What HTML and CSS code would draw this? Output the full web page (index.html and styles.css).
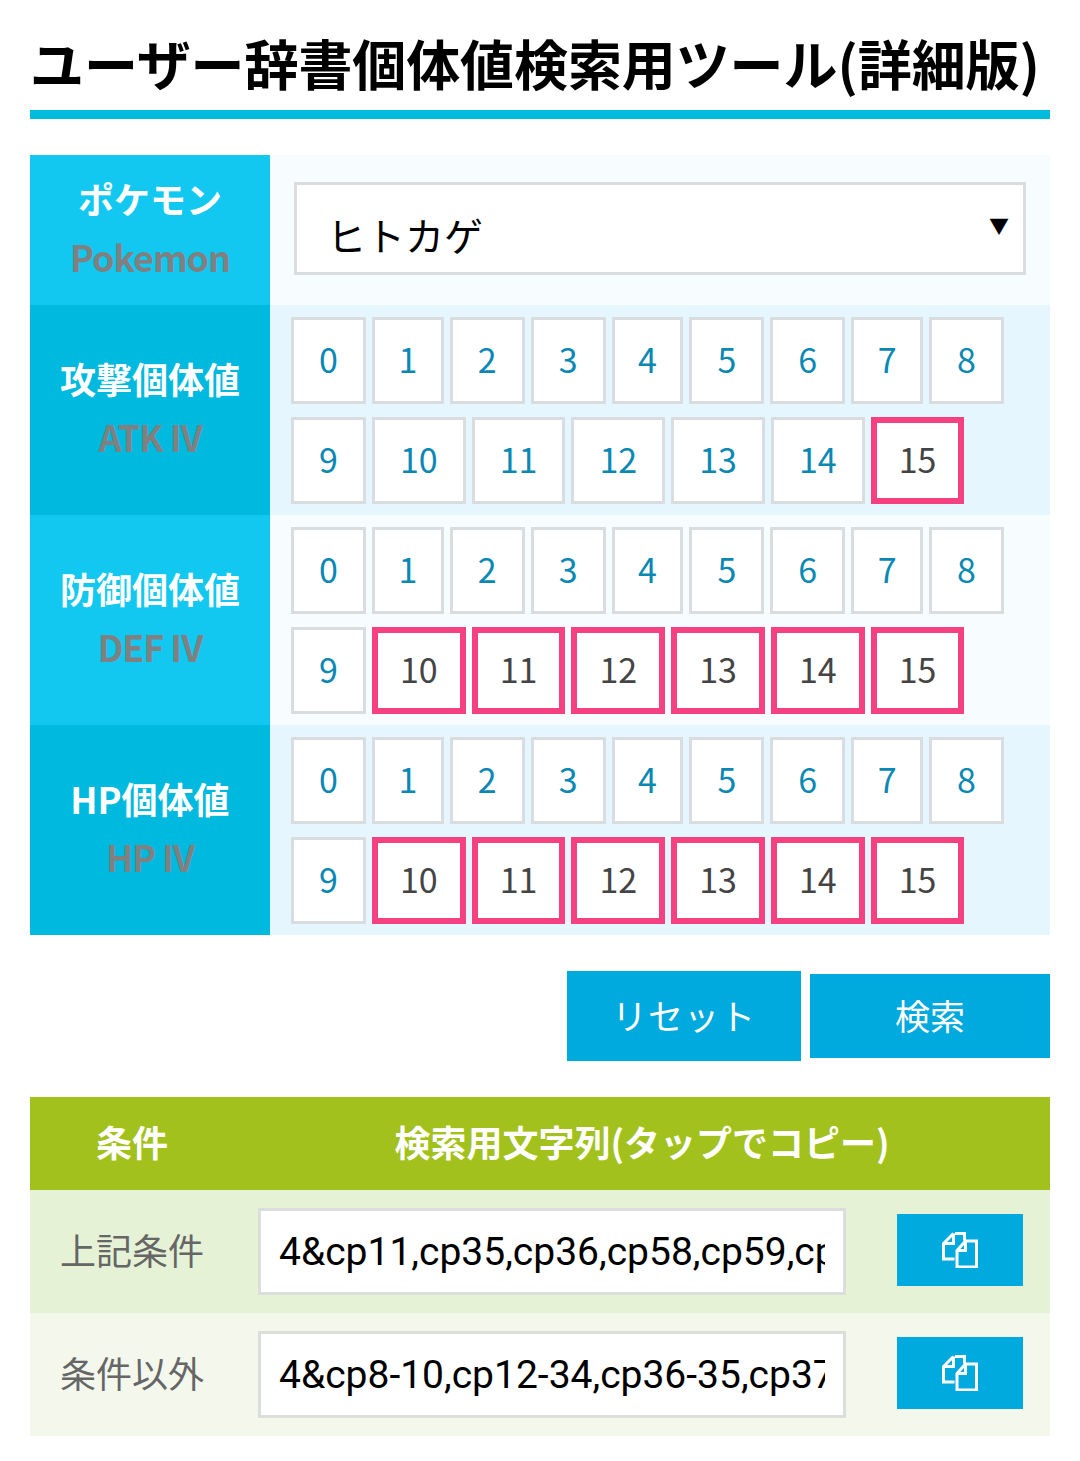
FILE: index.html
```html
<!DOCTYPE html>
<html lang="ja">
<head>
  <meta charset="UTF-8" />
  <meta name="viewport" content="width=device-width, initial-scale=1.0"/>
  <title>ユーザー辞書個体値検索用ツール(詳細版)</title>
  <link rel="stylesheet" href="styles.css">
</head>
<body>

<h1 class="page-title">ユーザー辞書個体値検索用ツール(詳細版)</h1>

<section class="form-table">
  <div class="form-row">
    <div class="form-label">ポケモン<span class="label-en">Pokemon</span></div>
    <div class="form-body pokemon-body">
      <div class="select-wrap">
        <select class="pokemon-select"><option>ヒトカゲ</option></select>
      </div>
    </div>
  </div>

  <div class="form-row">
    <div class="form-label">攻撃個体値<span class="label-en">ATK IV</span></div>
    <div class="form-body iv-list">
      <span class="iv">0</span><span class="iv narrow">1</span><span class="iv">2</span><span class="iv">3</span><span class="iv narrow">4</span><span class="iv">5</span><span class="iv">6</span><span class="iv narrow">7</span><span class="iv">8</span>
      <span class="iv">9</span><span class="iv">10</span><span class="iv">11</span><span class="iv">12</span><span class="iv">13</span><span class="iv">14</span><span class="iv on">15</span>
    </div>
  </div>

  <div class="form-row">
    <div class="form-label">防御個体値<span class="label-en">DEF IV</span></div>
    <div class="form-body iv-list">
      <span class="iv">0</span><span class="iv narrow">1</span><span class="iv">2</span><span class="iv">3</span><span class="iv narrow">4</span><span class="iv">5</span><span class="iv">6</span><span class="iv narrow">7</span><span class="iv">8</span>
      <span class="iv">9</span><span class="iv on">10</span><span class="iv on">11</span><span class="iv on">12</span><span class="iv on">13</span><span class="iv on">14</span><span class="iv on">15</span>
    </div>
  </div>

  <div class="form-row">
    <div class="form-label">HP個体値<span class="label-en">HP IV</span></div>
    <div class="form-body iv-list">
      <span class="iv">0</span><span class="iv narrow">1</span><span class="iv">2</span><span class="iv">3</span><span class="iv narrow">4</span><span class="iv">5</span><span class="iv">6</span><span class="iv narrow">7</span><span class="iv">8</span>
      <span class="iv">9</span><span class="iv on">10</span><span class="iv on">11</span><span class="iv on">12</span><span class="iv on">13</span><span class="iv on">14</span><span class="iv on">15</span>
    </div>
  </div>
</section>

<div class="actions">
  <button class="btn btn-reset">リセット</button>
  <button class="btn btn-search">検索</button>
</div>

<section class="result-table">
  <div class="result-head">
    <div class="head-cond">条件</div>
    <div class="head-text">検索用文字列(タップでコピー)</div>
  </div>

  <div class="result-row">
    <div class="result-label">上記条件</div>
    <input class="result-input" type="text" value="4&amp;cp11,cp35,cp36,cp58,cp59,cp60,cp61">
    <button class="copy-btn" aria-label="コピー">
      <svg class="copy-icon" viewBox="0 0 36 36"><path d="M13 1.5h9.500v7M11.500 1.500L1.500 11.500V27h11M11.500 1.500V11.500H1.500M23.500 9H34.500V35H15V18.500ZM23.500 9V18.500H15"/></svg>
    </button>
  </div>

  <div class="result-row">
    <div class="result-label">条件以外</div>
    <input class="result-input" type="text" value="4&amp;cp8-10,cp12-34,cp36-35,cp37-57">
    <button class="copy-btn" aria-label="コピー">
      <svg class="copy-icon" viewBox="0 0 36 36"><path d="M13 1.5h9.500v7M11.500 1.500L1.500 11.500V27h11M11.500 1.500V11.500H1.500M23.500 9H34.500V35H15V18.500ZM23.500 9V18.500H15"/></svg>
    </button>
  </div>
</section>

</body>
</html>
```

FILE: styles.css
```css
body {
  margin: 0;
  padding: 30px 30px 25px;
  background-color: #fff;
  font-family: "Noto Sans CJK JP", "Noto Sans", sans-serif;
  color: #333;
}
.page-title {
  margin: 0 0 36px;
  height: 80px;
  line-height: 66px;
  font-size: 54px;
  font-weight: 700;
  letter-spacing: -0.1px;
  color: #000;
  white-space: nowrap;
  border-bottom: 9px solid #00bcdc;
}
.form-row {
  display: flex;
  min-height: 210px;
}
.form-row:first-child {
  min-height: 150px;
}
.form-label {
  box-sizing: border-box;
  width: 240px;
  flex-shrink: 0;
  display: flex;
  flex-direction: column;
  justify-content: center;
  align-items: center;
  padding-bottom: 6px;
  font-size: 36px;
  font-weight: 700;
  line-height: 58px;
  color: #fff;
  background-color: #00b9df;
}
.form-row:nth-child(odd) .form-label {
  background-color: #12c8f0;
}
.label-en {
  color: #808080;
  letter-spacing: -1.1px;
}
.form-body {
  flex: 1;
  background-color: #e5f6ff;
}
.form-row:nth-child(odd) .form-body {
  background-color: #f7fcff;
}
.pokemon-body {
  padding: 27px 24px 0;
}
.select-wrap {
  position: relative;
}
.select-wrap::after {
  content: "▼";
  position: absolute;
  top: 26px;
  right: 17px;
  font-size: 20px;
  line-height: 36px;
  color: #000;
}
.pokemon-select {
  appearance: none;
  display: block;
  width: 100%;
  height: 93px;
  padding: 10px 30px 0;
  border: 3px solid #dadcde;
  border-radius: 0;
  background-color: #fff;
  font-family: inherit;
  font-size: 39px;
  color: #000;
}
.iv-list {
  display: flex;
  flex-wrap: wrap;
  align-content: flex-start;
  gap: 13px 6px;
  padding: 12px 0 0 21px;
}
.iv {
  box-sizing: border-box;
  height: 87px;
  padding: 0 25px 4px;
  display: flex;
  align-items: center;
  border: 3px solid #d9dde0;
  background-color: #fff;
  font-size: 34px;
  color: #0a88b4;
  font-feature-settings: "palt";
}
.iv.narrow {
  padding-left: 23.5px;
  padding-right: 23.5px;
}
.iv.on {
  padding: 0 22px 4px;
  border: 6px solid #f5417f;
  color: #444;
}
.actions {
  display: flex;
  justify-content: flex-end;
  align-items: center;
  gap: 9px;
  margin: 36px 0;
}
.btn {
  border: none;
  border-radius: 0;
  padding: 0 0 4px;
  background-color: #00a9de;
  font-family: inherit;
  color: #fff;
}
.btn-reset {
  width: 234px;
  height: 90px;
  font-size: 35px;
  letter-spacing: 1px;
}
.btn-search {
  width: 240px;
  height: 84px;
  font-size: 35px;
}
.result-head {
  display: flex;
  height: 93px;
  padding-bottom: 6px;
  box-sizing: border-box;
  align-items: center;
  background-color: #a2c11c;
  font-size: 36px;
  font-weight: 700;
  color: #fff;
  text-align: center;
}
.head-cond {
  width: 204px;
}
.head-text {
  flex: 1;
}
.result-row {
  display: flex;
  align-items: center;
  height: 123px;
  background-color: #e5f2d5;
}
.result-row:last-child {
  background-color: #f3f7ec;
}
.result-label {
  width: 198px;
  padding: 0 0 6px 30px;
  font-size: 36px;
  color: #666;
}
.result-input {
  box-sizing: border-box;
  width: 588px;
  height: 87px;
  padding: 0 18px;
  border: 3px solid #dcdedc;
  border-radius: 0;
  background-color: #fff;
  font-family: Roboto, "Noto Sans CJK JP", sans-serif;
  font-size: 39px;
  color: #000;
}
.copy-btn {
  width: 126px;
  height: 72px;
  margin: 0 0 3px 51px;
  padding: 0;
  border: none;
  background-color: #00a9de;
  display: flex;
  align-items: center;
  justify-content: center;
}
.copy-icon {
  width: 36px;
  height: 36px;
  fill: none;
  stroke: #fff;
  stroke-width: 3;
}
```
